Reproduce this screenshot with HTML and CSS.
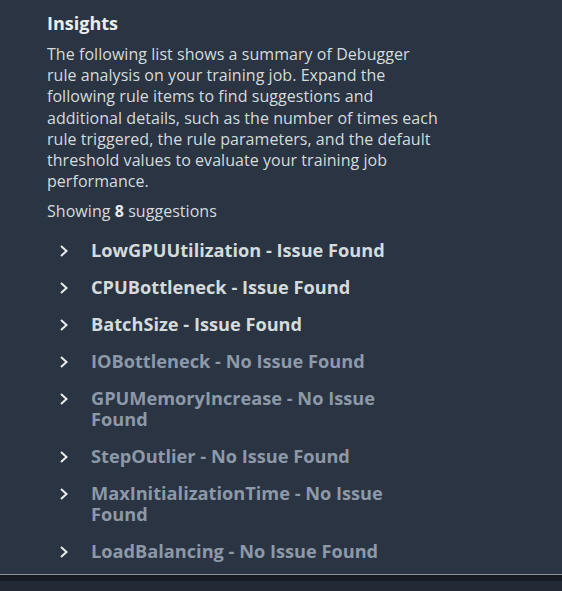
FILE: index.html
```html
<!DOCTYPE html>
<html>
<head>
<meta charset="utf-8">
<link rel="stylesheet" href="styles.css">
</head>
<body>
<div class="page">
  <section class="panel">
    <h2 class="title">Insights</h2>
    <p class="desc">The following list shows a summary of Debugger rule analysis on your training job. Expand the following rule items to find suggestions and additional details, such as the number of times each rule triggered, the rule parameters, and the default threshold values to evaluate your training job performance.</p>
    <p class="count">Showing <b>8</b> suggestions</p>
    <ul class="rules">
      <li class="rule issue"><svg class="chev" viewBox="0 0 10 14"><path d="M2 2 L7.5 7 L2 12"/></svg><span>LowGPUUtilization - Issue Found</span></li>
      <li class="rule issue"><svg class="chev" viewBox="0 0 10 14"><path d="M2 2 L7.5 7 L2 12"/></svg><span>CPUBottleneck - Issue Found</span></li>
      <li class="rule issue"><svg class="chev" viewBox="0 0 10 14"><path d="M2 2 L7.5 7 L2 12"/></svg><span>BatchSize - Issue Found</span></li>
      <li class="rule ok"><svg class="chev" viewBox="0 0 10 14"><path d="M2 2 L7.5 7 L2 12"/></svg><span>IOBottleneck - No Issue Found</span></li>
      <li class="rule ok"><svg class="chev" viewBox="0 0 10 14"><path d="M2 2 L7.5 7 L2 12"/></svg><span>GPUMemoryIncrease - No Issue Found</span></li>
      <li class="rule ok"><svg class="chev" viewBox="0 0 10 14"><path d="M2 2 L7.5 7 L2 12"/></svg><span>StepOutlier - No Issue Found</span></li>
      <li class="rule ok"><svg class="chev" viewBox="0 0 10 14"><path d="M2 2 L7.5 7 L2 12"/></svg><span>MaxInitializationTime - No Issue Found</span></li>
      <li class="rule ok"><svg class="chev" viewBox="0 0 10 14"><path d="M2 2 L7.5 7 L2 12"/></svg><span>LoadBalancing - No Issue Found</span></li>
    </ul>
  </section>
  <div class="footer-line"></div>
  <div class="footer-dark"></div>
  <div class="footer"></div>
</div>
</body>
</html>
```
FILE: styles.css
```css
* { box-sizing: border-box; }
html, body { margin: 0; padding: 0; background: #2a3443; }
body { font-family: "Open Sans", "Noto Sans", sans-serif; color: #d5dbdb; }
.page { width: 562px; height: 591px; display: flex; flex-direction: column; overflow: hidden; }
.panel { height: 574px; padding: 10px 0 0 47px; }
.title { margin: 0; font-size: 18px; line-height: 26px; font-weight: 700; color: #eaeded; }
.desc { margin: 8px 0 0; width: 394px; font-size: 16px; letter-spacing: 0.05px; line-height: 21.2px; }
.count { margin: 9px 0 0; font-size: 16px; letter-spacing: 0.05px; line-height: 21px; }
.count b { color: #eaeded; }
.rules { list-style: none; margin: 18px 0 0; padding: 0; display: flex; flex-direction: column; gap: 16px; }
.rule { display: flex; align-items: flex-start; font-size: 18.2px; line-height: 21px; font-weight: 700; }
.rule .chev { width: 10px; height: 14px; margin: 4px 0 0 12px; flex: none; fill: none; stroke: #e9ebed; stroke-width: 2; }
.rule span { margin-left: 22px; width: 310px; }
.issue span { color: #d5dbdb; }
.ok span { color: #8d99a8; }
.footer-line { height: 1px; background: #8e939a; }
.footer-dark { height: 6px; background: #161b22; }
.footer { flex: 1; background: #222a36; }
```
